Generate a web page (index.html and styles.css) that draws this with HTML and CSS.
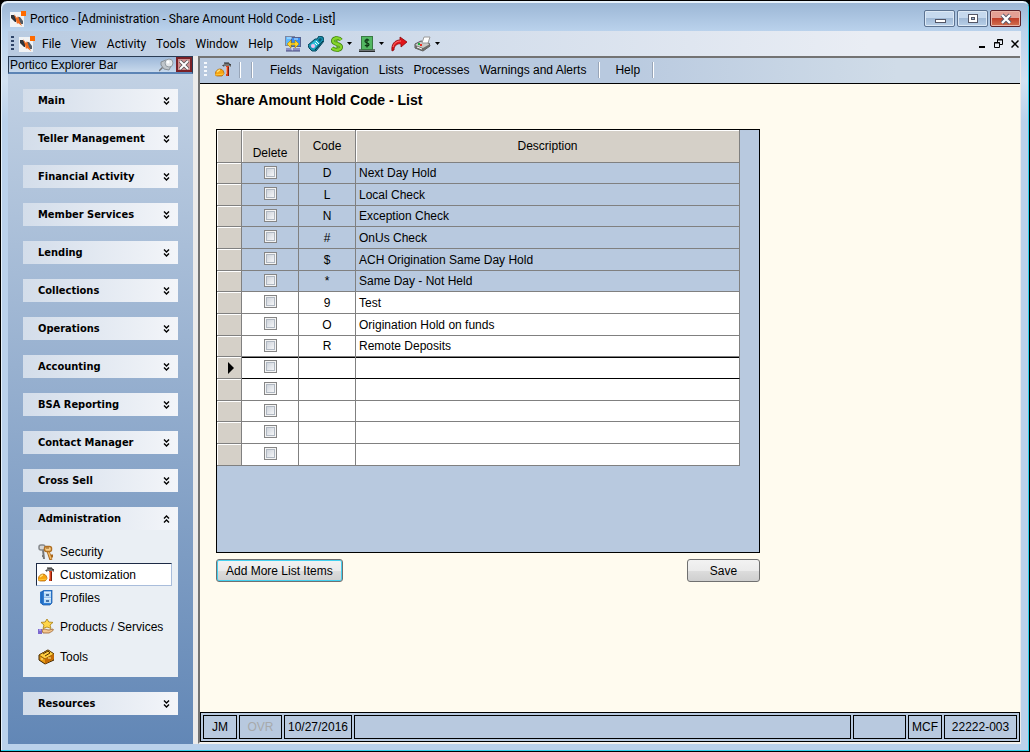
FILE: index.html
```html
<!DOCTYPE html>
<html lang="en">
<head>
    <meta charset="UTF-8">
    <meta name="viewport" content="width=device-width, initial-scale=1.0">
    <title>Portico - [Administration - Share Amount Hold Code - List]</title>
    <link rel="stylesheet" href="styles.css">
</head>
<body>
    <!-- shared symbols -->
    <svg class="symbols" aria-hidden="true">
        <symbol id="logo" viewBox="0 0 16 16">
            <rect y="1" width="14" height="15" fill="#f1f3f5"/>
            <path d="M1 4h3l2 3v4H5L1 7z" fill="#30343a"/>
            <path d="M8 6h2l3 4v3h-2L8 10z" fill="#555b63"/>
            <path d="M4 3l3 4 1-2 2 6 2 4-4-3-1 1-1-4z" fill="#f26a1b"/>
            <rect x="11" width="5" height="5" fill="#ff6a00"/>
        </symbol>
        <symbol id="helmet" viewBox="0 0 16 16">
            <path d="M0 13c0-4 3-6 5-6 3 0 4 3 4 5l-2 2H2z" fill="#f7a510" stroke="#a85c00" stroke-width=".7"/>
            <path d="M2 10c1-1 2-2 3-2" stroke="#ffe27a" stroke-width="1.3" fill="none"/>
            <path d="M0 13l9-1" stroke="#ffc93e"/>
            <path d="M8 3l2-2h4l2 2v2l-2-1h-4l-2 1z" fill="#777"/>
            <path d="M9 1h5M8 3v1M14 2l2 1" stroke="#222"/>
            <path d="M11 4h3v10h-3z" fill="#d9401c"/>
            <path d="M13.500 5v9" stroke="#7d1c08"/>
            <path d="M11.500 5v7" stroke="#ff9a70"/>
        </symbol>
        <symbol id="chevrons" viewBox="0 0 7 8">
            <path d="M1 .5l2.500 2.500 2.500-2.500M1 4.500l2.500 2.500 2.500-2.500" fill="none" stroke="#000" stroke-width="1.400"/>
        </symbol>
        <symbol id="arrow" viewBox="0 0 5 3">
            <path d="M0 0h5l-2.500 3z" fill="#000"/>
        </symbol>
    </svg>

    <div class="window">
        <header class="title-bar">
            <svg class="icon"><use href="#logo"/></svg>
            <h1>Portico - [Administration - Share Amount Hold Code - List]</h1>
            <div class="window-buttons">
                <button aria-label="Minimize"><svg width="12" height="12" viewBox="0 0 12 12"><rect x="1.500" y="6.500" width="10" height="3" fill="#fff" stroke="#535666"/></svg></button>
                <button aria-label="Maximize"><svg width="12" height="12" viewBox="0 0 12 12"><rect x="1.500" y="1.500" width="9" height="8" fill="#fff" stroke="#535666"/><rect x="4.500" y="4.500" width="3" height="2" fill="#9cb6d3" stroke="#535666"/></svg></button>
                <button class="close" aria-label="Close"><svg width="12" height="12" viewBox="0 0 12 12"><path d="M2 2l8 8M10 2l-8 8" stroke="#535666" stroke-width="4"/><path d="M2 2l8 8M10 2l-8 8" stroke="#fff" stroke-width="2.400"/></svg></button>
            </div>
        </header>

        <div class="frame">
            <div class="menu-bar">
                <span class="grip grip-dark"></span>
                <svg class="icon menu-logo"><use href="#logo"/></svg>
                <nav class="menus">
                    <button>File</button>
                    <button>View</button>
                    <button>Activity</button>
                    <button>Tools</button>
                    <button>Window</button>
                    <button>Help</button>
                </nav>
                <div class="tools">
                    <button aria-label="Connect">
                        <svg class="icon" viewBox="0 0 16 16">
                            <rect x=".5" y=".5" width="9" height="9" fill="#5fb8ff" stroke="#7c87a3"/>
                            <rect x="6.500" y="1.500" width="9" height="9" fill="#3a8cf0" stroke="#55618f"/>
                            <path d="M2 2h5M9 3h4" stroke="#c5ecff"/>
                            <path d="M1 12h5l1 3H1zM8 12h7v3H8z" fill="#8f90c4"/>
                            <path d="M1 15h14" stroke="#454a80"/>
                            <path d="M2 8l4-4v3h4V4l4 4-4 4V9H6v3z" fill="#ffd32a" stroke="#a68400" stroke-width=".6"/>
                        </svg>
                    </button>
                    <button aria-label="Calculator">
                        <svg class="icon" viewBox="0 0 16 16">
                            <path d="M0 9l7-6h2l2-3 4 1 1 4-8 10H4l-3-3z" fill="#1790ae" stroke="#07485d"/>
                            <path d="M2 9l6-5 3 3-5 6z" fill="#2fc1da"/>
                            <path d="M10 4l2-2 2 1-2 3z" fill="#0b5b73"/>
                            <circle cx="5" cy="10" r="2" fill="#f5bcea"/>
                            <path d="M7 7l2 2M8 5l3 3" stroke="#e4ffff"/>
                            <path d="M7 14l8-9" stroke="#053748"/>
                        </svg>
                    </button>
                    <button class="has-arrow" aria-label="Cash">
                        <svg class="icon icon-narrow" viewBox="0 0 12 16">
                            <path d="M10 4C8 1 2 2 2 5c0 4 8 2 8 6 0 3-6 4-9 1" fill="none" stroke="#3d7d0c" stroke-width="4"/>
                            <path d="M5 0l2 16" stroke="#5ba71b" stroke-width="2"/>
                            <path d="M10 4C8 1 2 2 2 5c0 4 8 2 8 6 0 3-6 4-9 1" fill="none" stroke="#85d52b" stroke-width="2.400"/>
                        </svg>
                        <svg class="arrow"><use href="#arrow"/></svg>
                    </button>
                    <button class="has-arrow" aria-label="Deposit">
                        <svg class="icon" viewBox="0 0 16 16">
                            <rect x="2.500" y=".5" width="11" height="13" fill="#53b862" stroke="#397a43"/>
                            <path d="M10 4.500C9 3 6 3.500 6 5.200c0 2 4 1.200 4 3.300 0 1.800-3 2-4 .5M8 2.500v9" fill="none" stroke="#0c3413" stroke-width="1.200"/>
                            <path d="M0 13h2v1h12v-1h2v3H0z" fill="#6e7476"/>
                            <path d="M0 15.500h16" stroke="#272b2d"/>
                        </svg>
                        <svg class="arrow"><use href="#arrow"/></svg>
                    </button>
                    <button aria-label="Forward">
                        <svg class="icon" viewBox="0 0 16 16">
                            <path d="M1 15C0 8 4 4 9 4V1l7 5-6 5V8C6 7 3 10 3 14z" fill="#e11419" stroke="#8c0508" stroke-width=".8"/>
                            <path d="M2 11c1-4 4-6 8-6" stroke="#ff7b76" fill="none"/>
                        </svg>
                    </button>
                    <button class="has-arrow" aria-label="Print">
                        <svg class="icon icon-wide" viewBox="0 0 17 16">
                            <path d="M1 8l6-3 8 2 1 3-7 5-8-3z" fill="#c9c9c6" stroke="#555"/>
                            <path d="M1 9l8 3 7-4v2l-7 5-8-3z" fill="#6c6c69"/>
                            <path d="M8 7l2-6h6l-2 6z" fill="#fff" stroke="#9a9a9a"/>
                            <path d="M4 8h2" stroke="#19b03c" stroke-width="2"/>
                            <path d="M6 9h2" stroke="#f02a1e" stroke-width="2"/>
                            <path d="M3 11l5 2" stroke="#fff"/>
                        </svg>
                        <svg class="arrow"><use href="#arrow"/></svg>
                    </button>
                </div>
                <div class="mdi-buttons">
                    <button aria-label="Minimize list"><svg width="8" height="8"><path d="M1 7h6" stroke="#000" stroke-width="2"/></svg></button>
                    <button aria-label="Restore list"><svg width="9" height="9"><path d="M3.500 3V.5h5v5H6M3 1h6M.5 3.500h5v5h-5zM0 4h6" fill="none" stroke="#000"/></svg></button>
                    <button aria-label="Close list"><svg width="8" height="8"><path d="M.5.5l7 7M7.500.5l-7 7" stroke="#000" stroke-width="1.500"/></svg></button>
                </div>
            </div>

            <div class="workspace">
                <aside class="explorer">
                    <div class="explorer-header">
                        <h2>Portico Explorer Bar</h2>
                        <button class="pin" aria-label="Auto hide">
                            <svg width="15" height="14" viewBox="0 0 15 14">
                                <path d="M0 13l4-4" stroke="#777" stroke-width="1.500"/>
                                <path d="M2 4l5-2 5 6-2 4-5-1-3-4z" fill="#bfc5ca" stroke="#868e95"/>
                                <circle cx="10" cy="5" r="4" fill="#e3e7ea" stroke="#949ca3"/>
                                <circle cx="9" cy="4" r="1.500" fill="#fff"/>
                            </svg>
                        </button>
                        <button class="explorer-close" aria-label="Close explorer"><svg width="10" height="10"><path d="M1 1l8 8M9 1l-8 8" stroke="#555" stroke-width="3.600"/><path d="M1 1l8 8M9 1l-8 8" stroke="#fff" stroke-width="2"/></svg></button>
                    </div>
                    <nav class="groups">
                        <button class="group">Main <svg class="chevrons"><use href="#chevrons"/></svg></button>
                        <button class="group">Teller Management <svg class="chevrons"><use href="#chevrons"/></svg></button>
                        <button class="group">Financial Activity <svg class="chevrons"><use href="#chevrons"/></svg></button>
                        <button class="group">Member Services <svg class="chevrons"><use href="#chevrons"/></svg></button>
                        <button class="group">Lending <svg class="chevrons"><use href="#chevrons"/></svg></button>
                        <button class="group">Collections <svg class="chevrons"><use href="#chevrons"/></svg></button>
                        <button class="group">Operations <svg class="chevrons"><use href="#chevrons"/></svg></button>
                        <button class="group">Accounting <svg class="chevrons"><use href="#chevrons"/></svg></button>
                        <button class="group">BSA Reporting <svg class="chevrons"><use href="#chevrons"/></svg></button>
                        <button class="group">Contact Manager <svg class="chevrons"><use href="#chevrons"/></svg></button>
                        <button class="group">Cross Sell <svg class="chevrons"><use href="#chevrons"/></svg></button>
                        <div class="group-open">
                            <button class="group">Administration <svg class="chevrons up"><use href="#chevrons"/></svg></button>
                            <div class="group-items">
                                <a href="#security">
                                    <svg class="icon" viewBox="0 0 16 16">
                                        <path d="M5 6l1 9M4 12h2" stroke="#777" stroke-width="2"/>
                                        <rect x="1" y="1" width="6" height="5" rx="2" fill="#d5d6d6" stroke="#85888b" stroke-width="1.500"/>
                                        <path d="M10 7l3 9M11 12h4" stroke="#a8651b" stroke-width="3"/>
                                        <path d="M10 7l3 8" stroke="#f2bd68" stroke-width="1.500"/>
                                        <rect x="6.500" y="2.500" width="7" height="5" rx="2" fill="#f7cf8b" stroke="#b06f22" stroke-width="1.500"/>
                                        <path d="M8 4h3" stroke="#8d5313"/>
                                    </svg>
                                    Security
                                </a>
                                <a href="#customization" class="selected">
                                    <svg class="icon"><use href="#helmet"/></svg>
                                    Customization
                                </a>
                                <a href="#profiles">
                                    <svg class="icon" viewBox="0 0 16 16">
                                        <path d="M2 2l4-2 1 14-2 1-3-2z" fill="#2878d0"/>
                                        <path d="M4 2l3-2h7v13l-2 2H5l-1-1z" fill="#2f7fd8" stroke="#17539d" stroke-width=".7"/>
                                        <path d="M6 2h7v5H6zM6 8h7v5H6z" fill="#b9dcf8"/>
                                        <path d="M8 4h3v2H8zM8 10h3v2H8z" fill="#4773a8"/>
                                        <path d="M6 2h7M6 8h7" stroke="#fff"/>
                                    </svg>
                                    Profiles
                                </a>
                                <a href="#products" class="roomy">
                                    <svg class="icon" viewBox="0 0 16 16">
                                        <path d="M9 0l1.800 3 4.200.4-3 2.600 1 3.500L9 8 5 9.500 6 6 3 3.400 7.200 3z" fill="#ffd64a" stroke="#a97d12" stroke-width=".8"/>
                                        <path d="M4 11c3-2 4 0 7 0l4-1c1 1 0 2-4 4H5z" fill="#f3c78f" stroke="#99602d" stroke-width=".8"/>
                                        <path d="M0 10h4v5H0z" fill="#7b68cf"/>
                                        <path d="M1 11h2" stroke="#cdc3ff"/>
                                    </svg>
                                    Products / Services
                                </a>
                                <a href="#tools" class="roomy">
                                    <svg class="icon" viewBox="0 0 16 16">
                                        <path d="M1 6l9-5 6 4v6l-9 4-6-4z" fill="#e99a12" stroke="#3c2300"/>
                                        <path d="M1 6l9-5 6 4-9 5z" fill="#ffce3f" stroke="#5c3500" stroke-width=".7"/>
                                        <path d="M7 10l9-5v5l-9 5z" fill="#c46c05"/>
                                        <path d="M5 5l5-3 2 2-5 3" fill="none" stroke="#573100"/>
                                        <path d="M10 9h3M4 9v2" stroke="#fff2a0"/>
                                    </svg>
                                    Tools
                                </a>
                            </div>
                        </div>
                        <button class="group">Resources <svg class="chevrons"><use href="#chevrons"/></svg></button>
                    </nav>
                </aside>

                <main class="content">
                    <div class="toolbar">
                        <span class="grip"></span>
                        <button class="customize" aria-label="Customize"><svg class="icon"><use href="#helmet"/></svg></button>
                        <span class="separator"></span>
                        <span class="separator"></span>
                        <div class="toolbar-menus">
                            <button>Fields</button>
                            <button>Navigation</button>
                            <button>Lists</button>
                            <button>Processes</button>
                            <button>Warnings and Alerts</button>
                        </div>
                        <span class="separator"></span>
                        <button class="help">Help</button>
                        <span class="separator"></span>
                    </div>

                    <form class="page">
                        <h2>Share Amount Hold Code - List</h2>
                        <div class="grid">
                            <table>
                                <thead>
                                    <tr>
                                        <th class="row-header"></th>
                                        <th class="delete">Delete</th>
                                        <th class="code">Code</th>
                                        <th>Description</th>
                                    </tr>
                                </thead>
                                <tbody>
                                    <tr class="locked"><th></th><td><input type="checkbox" aria-label="Delete D"></td><td>D</td><td>Next Day Hold</td></tr>
                                    <tr class="locked"><th></th><td><input type="checkbox" aria-label="Delete L"></td><td>L</td><td>Local Check</td></tr>
                                    <tr class="locked"><th></th><td><input type="checkbox" aria-label="Delete N"></td><td>N</td><td>Exception Check</td></tr>
                                    <tr class="locked"><th></th><td><input type="checkbox" aria-label="Delete #"></td><td>#</td><td>OnUs Check</td></tr>
                                    <tr class="locked"><th></th><td><input type="checkbox" aria-label="Delete $"></td><td>$</td><td>ACH Origination Same Day Hold</td></tr>
                                    <tr class="locked"><th></th><td><input type="checkbox" aria-label="Delete *"></td><td>*</td><td>Same Day - Not Held</td></tr>
                                    <tr><th></th><td><input type="checkbox" aria-label="Delete 9"></td><td>9</td><td>Test</td></tr>
                                    <tr><th></th><td><input type="checkbox" aria-label="Delete O"></td><td>O</td><td>Origination Hold on funds</td></tr>
                                    <tr><th></th><td><input type="checkbox" aria-label="Delete R"></td><td>R</td><td>Remote Deposits</td></tr>
                                    <tr class="current"><th><svg width="6" height="12"><path d="M0 0l6 6-6 6z"/></svg></th><td><input type="checkbox" aria-label="Delete row 10"></td><td></td><td></td></tr>
                                    <tr><th></th><td><input type="checkbox" aria-label="Delete row 11"></td><td></td><td></td></tr>
                                    <tr><th></th><td><input type="checkbox" aria-label="Delete row 12"></td><td></td><td></td></tr>
                                    <tr><th></th><td><input type="checkbox" aria-label="Delete row 13"></td><td></td><td></td></tr>
                                    <tr><th></th><td><input type="checkbox" aria-label="Delete row 14"></td><td></td><td></td></tr>
                                </tbody>
                            </table>
                        </div>
                        <div class="actions">
                            <button type="button" class="btn btn-default">Add More List Items</button>
                            <button type="button" class="btn">Save</button>
                        </div>
                    </form>

                    <footer class="status-bar">
                        <span class="user">JM</span>
                        <span class="mode">OVR</span>
                        <span class="date">10/27/2016</span>
                        <span class="message"></span>
                        <span class="progress"></span>
                        <span class="branch">MCF</span>
                        <span class="member">22222-003</span>
                    </footer>
                </main>
            </div>
        </div>
    </div>
</body>
</html>
```

FILE: styles.css
```css
* {
    box-sizing: border-box;
    margin: 0;
    padding: 0;
}

body {
    height: 100vh;
    background: #000;
    font-family: "Liberation Sans", Arial, sans-serif;
    font-size: 12px;
    line-height: 16px;
    color: #000;
}

button {
    border: none;
    background: none;
    font: inherit;
    color: inherit;
    white-space: nowrap;
}

svg {
    display: block;
    flex: none;
}

.symbols {
    position: absolute;
    width: 0;
    height: 0;
}

.icon {
    width: 16px;
    height: 16px;
}

.icon-narrow {
    width: 12px;
}

.icon-wide {
    width: 17px;
}

/* window frame */
.window {
    display: flex;
    flex-direction: column;
    min-height: 100vh;
    padding: 0 8px 7px 7px;
    border: 1px solid #000;
    border-radius: 7px 7px 0 0;
    background: linear-gradient(#9ab5d4, #bad2ec 30px, #d3e2f2 80px, #bad1eb 120px);
    box-shadow: inset -1px -1px #2cd0ea, inset 1px 2px #e6f1fb;
}

.title-bar {
    display: flex;
    align-items: center;
    gap: 4px;
    height: 30px;
    padding: 5px 0 0 2px;
    font-family: Roboto, "Segoe UI", sans-serif;
}

.title-bar h1 {
    flex: 1;
    font-size: 12px;
    font-weight: normal;
}

.window-buttons {
    display: flex;
    gap: 2px;
}

.window-buttons button {
    display: flex;
    align-items: center;
    justify-content: center;
    width: 31px;
    height: 17px;
    border: 1px solid #5d7391;
    border-radius: 2px;
    background: linear-gradient(#c6d9ee 45%, #a1bad7 50%, #b9d0e8);
    box-shadow: inset 0 0 0 1px #dde9f5;
}

.window-buttons .close {
    border-color: #5b2129;
    background: linear-gradient(#e3a095 45%, #bf402b 50%, #d3714f);
    box-shadow: inset 0 0 0 1px #eab5a8;
}

.frame {
    flex: 1;
    display: flex;
    flex-direction: column;
}

/* menu bar */
.menu-bar {
    display: flex;
    align-items: center;
    height: 25px;
    padding: 0 2px 0 3px;
    background: linear-gradient(90deg, #b9cbe1, #e9edf4 85%);
    font-family: Roboto, "Segoe UI", sans-serif;
}

.grip {
    width: 3px;
    height: 15px;
    background: repeating-linear-gradient(#f5f8fc 0 2px, transparent 2px 4px);
}

.grip-dark {
    background: repeating-linear-gradient(#2f4468 0 2px, transparent 2px 4px);
}

.menu-logo {
    margin-left: 5px;
}

.menus {
    display: flex;
    gap: 10px;
    margin-left: 7px;
}

.tools {
    display: flex;
    gap: 7px;
    margin-left: 12px;
}

.has-arrow {
    display: flex;
    align-items: center;
    gap: 4px;
}

.arrow {
    width: 5px;
    height: 3px;
}

.mdi-buttons {
    display: flex;
    align-items: center;
    gap: 8px;
    margin-left: auto;
}

/* explorer */
.workspace {
    flex: 1;
    display: flex;
    gap: 5px;
    background: #ecebea;
}

.explorer {
    flex: none;
    display: flex;
    flex-direction: column;
    width: 185px;
    background: linear-gradient(#c4d3e5, #6287b6);
}

.explorer-header {
    display: flex;
    align-items: center;
    gap: 2px;
    height: 18px;
    padding-left: 1px;
    border: 1px solid #2b3d55;
    border-bottom: 2px solid #5c84b5;
    background: linear-gradient(#9db8d9, #c8d9ec);
}

.explorer-header h2 {
    flex: 1;
    font-size: 12px;
    font-weight: normal;
}

.explorer-close {
    display: flex;
    align-items: center;
    justify-content: center;
    width: 16px;
    height: 15px;
    border: 2px solid #7a2026;
    background: #cf8f90;
}

.groups {
    display: flex;
    flex-direction: column;
    gap: 15px;
    padding: 15px;
}

.group {
    display: flex;
    align-items: center;
    justify-content: space-between;
    width: 100%;
    height: 23px;
    padding: 0 8px 0 15px;
    background: linear-gradient(90deg, #d3ddea, #f3f5f9);
    font-family: "DejaVu Sans Condensed", Tahoma, sans-serif;
    font-size: 11px;
    font-weight: bold;
}

.chevrons {
    width: 7px;
    height: 8px;
}

.chevrons.up {
    transform: rotate(180deg);
}

.group-items {
    display: flex;
    flex-direction: column;
    padding: 10px 6px 8px 13px;
    background: #eaeff4;
}

.group-items a {
    display: flex;
    align-items: center;
    gap: 6px;
    height: 23px;
    padding-left: 1px;
    border: 1px solid transparent;
    color: #000;
    text-decoration: none;
    white-space: nowrap;
}

.group-items .selected {
    border-color: #1d2a45 #a9bddb #a9bddb #1d2a45;
    background: #fff;
}

.group-items .roomy {
    height: 30px;
    margin-top: 3px;
    margin-bottom: -3px;
}

/* content */
.content {
    flex: 1;
    display: flex;
    flex-direction: column;
    min-width: 0;
    margin-right: 1px;
    border-top: 2px solid #737373;
    border-left: 2px solid #737373;
    border-bottom: 2px solid #f3f1ee;
    background: #fffbef;
}

.toolbar {
    display: flex;
    align-items: center;
    height: 26px;
    padding: 0 0 2px 4px;
    border-bottom: 1px solid #000;
    background: linear-gradient(90deg, #b8c9df 50%, #d0dce8 85%);
}

.customize {
    margin: 0 8px 0 8px;
}

.separator {
    width: 2px;
    height: 16px;
    margin-right: 10px;
    border-left: 1px solid #98a5b8;
    border-right: 1px solid #fff;
}

.toolbar-menus {
    display: flex;
    gap: 10px;
    margin: 0 12px 0 7px;
}

.help {
    margin: 0 12px 0 5px;
}

.page {
    flex: 1;
    padding: 8px 16px;
}

.page h2 {
    font-size: 14px;
    font-weight: bold;
}

.grid {
    max-width: 544px;
    min-height: 424px;
    margin-top: 21px;
    padding-right: 19px;
    border: 1px solid #000;
    background: #b8c9df;
}

table {
    width: 100%;
    border-collapse: separate;
    border-spacing: 0;
    table-layout: fixed;
}

th,
td {
    border-right: 1px solid #808080;
    border-bottom: 1px solid #808080;
}

th {
    background: #d5d0c8;
    box-shadow: inset 1px 1px #fff;
    font-weight: normal;
}

thead th {
    height: 33px;
}

.row-header {
    width: 25px;
}

.delete,
.code {
    width: 57px;
}

.delete {
    padding-top: 13px;
}

tbody tr {
    height: 22px;
    background: #fff;
}

tbody tr:first-child,
tbody tr:nth-child(3n) {
    height: 21px;
}

tbody .locked {
    background: #b8c9df;
}

td {
    text-align: center;
}

td:last-child {
    padding-left: 3px;
    text-align: left;
}

tbody th svg {
    margin-left: 11px;
}

.current td {
    border-bottom-color: #000;
    box-shadow: inset 0 1px #000;
}

td input {
    display: block;
    appearance: none;
    width: 13px;
    height: 13px;
    margin: -2px auto 0;
    border: 1px solid #858585;
    outline: 1px solid #b0b8c2;
    outline-offset: -3px;
    background: linear-gradient(135deg, #c5cbd4, #fff);
    box-shadow: inset 0 0 0 1px #f4f4f4;
}

.actions {
    display: flex;
    justify-content: space-between;
    max-width: 544px;
    margin-top: 6px;
}

.btn {
    min-width: 73px;
    height: 23px;
    padding: 0 9px;
    border: 1px solid #707070;
    border-radius: 3px;
    background: linear-gradient(#f2f2f2, #ebebeb 50%, #dddddd 50%, #cfcfcf);
}

.btn-default {
    box-shadow: inset 0 0 0 1px #45d0ef;
}

/* status bar */
.status-bar {
    display: flex;
    gap: 2px;
    height: 30px;
    padding: 2px;
    border: 1px solid #000;
    background: #b8c9df;
}

.status-bar span {
    height: 24px;
    border: 1px solid #000;
    line-height: 22px;
    text-align: center;
    white-space: nowrap;
}

.user,
.branch {
    width: 34px;
}

.mode {
    width: 43px;
    color: #a7a9ac;
}

.date {
    width: 68px;
}

.message {
    flex: 1;
}

.progress {
    width: 53px;
}

.member {
    width: 73px;
}
```
